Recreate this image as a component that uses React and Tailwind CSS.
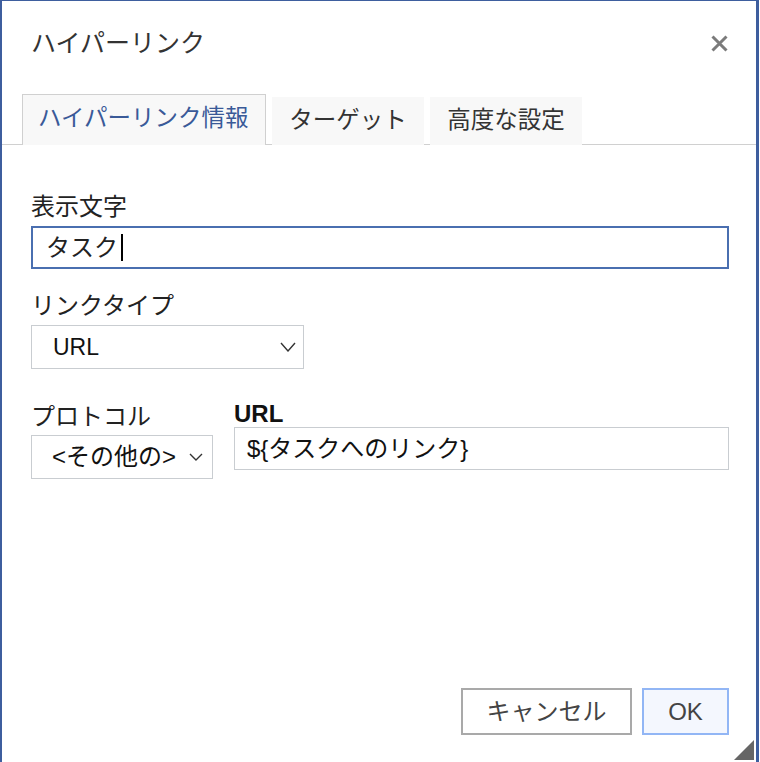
import React from "react";

const JP = { fontFamily: "'Liberation Sans','Noto Sans CJK JP',sans-serif" };

function Chevron({ w = 16, h = 9 }) {
  return (
    <svg width={w} height={h + 1} viewBox={`0 0 ${w} ${h + 1}`} fill="none">
      <polyline points={`1,1 ${w / 2},${h} ${w - 1},1`} stroke="#333" strokeWidth="1.4" />
    </svg>
  );
}

export default function App() {
  return (
    <div className="w-[760px] h-[762px] bg-white overflow-hidden" style={JP}>
      <div className="relative w-[759px] h-[763px] border-t border-l-2 border-r-[3px] border-[#3e5e9e] bg-white flex flex-col">
        {/* header */}
        <div className="h-[84px] shrink-0 flex items-center justify-between pl-[29px] pr-[28px]">
          <div className="text-[25px] text-[#333] leading-none">ハイパーリンク</div>
          <svg width="17" height="17" viewBox="0 0 17 17">
            <path d="M1.5 1.5 L15.5 15.5 M15.5 1.5 L1.5 15.5" stroke="#7b7b7b" strokeWidth="3" />
          </svg>
        </div>
        {/* tabs */}
        <div className="h-[60px] shrink-0 flex items-end gap-[6px] pl-[20px] border-b border-[#d0d0d0]">
          <div className="relative -mb-px w-[244px] h-[51px] border border-b-0 border-[#d0d0d0] bg-[#f8f8f8] flex items-center pl-[15px] pb-[3px] text-[23.5px] text-[#3a5a98] leading-none">
            ハイパーリンク情報
          </div>
          <div className="relative -mb-px w-[152px] h-[48px] bg-[#f8f8f8] flex items-center justify-center pb-[1px] text-[23.5px] text-[#333] leading-none">
            ターゲット
          </div>
          <div className="relative -mb-px w-[152px] h-[48px] bg-[#f8f8f8] flex items-center justify-center pb-[1px] text-[23.5px] text-[#333] leading-none">
            高度な設定
          </div>
        </div>
        {/* body */}
        <div className="flex-1 flex flex-col pl-[29px] pr-[27px]">
          <div className="mt-[47px] mb-[4px] h-[30px] flex items-center text-[24px] text-[#222] leading-none">表示文字</div>
          <div className="h-[43px] border-2 border-[#4a6fb0] flex items-center pl-[13px] text-[24px] text-[#222] leading-none">
            <span>タスク</span>
            <span className="ml-[3px] w-[2px] h-[27px] bg-black"></span>
          </div>
          <div className="mt-[22px] mb-[4px] h-[30px] flex items-center text-[24px] text-[#222] leading-none">リンクタイプ</div>
          <div className="w-[273px] h-[44px] border border-[#c9cdd1] flex items-center justify-between pl-[21px] pr-[7px] text-[23px] text-[#111] leading-none">
            <span>URL</span>
            <Chevron w={16} h={9} />
          </div>
          <div className="mt-[32px] flex gap-[21px] items-start">
            <div className="flex flex-col">
              <div className="mt-[1px] mb-[3px] h-[30px] flex items-center text-[24px] text-[#222] leading-none">プロトコル</div>
              <div className="w-[182px] h-[44px] border border-[#c9cdd1] flex items-center justify-between pl-[20px] pr-[9px] text-[24px] text-[#111] leading-none">
                <span>&lt;その他の&gt;</span>
                <Chevron w={14} h={7} />
              </div>
            </div>
            <div className="flex-1 flex flex-col">
              <div className="h-[26px] flex items-center text-[24px] font-bold text-[#111] leading-none">URL</div>
              <div className="h-[43px] border border-[#c9cdd1] flex items-center pl-[12px] text-[24px] text-[#111] leading-none">
                {"${タスクへのリンク}"}
              </div>
            </div>
          </div>
          <div className="mt-auto mb-[28px] flex justify-end gap-[10px]">
            <button className="w-[171px] h-[47px] border-2 border-[#a9a9a9] bg-white text-[24px] text-[#444] leading-none flex items-center justify-center">
              キャンセル
            </button>
            <button className="w-[87px] h-[47px] border-2 border-[#92b6f5] bg-[#f4f7fe] text-[24px] text-[#444] leading-none flex items-center justify-center">
              OK
            </button>
          </div>
        </div>
        <svg className="absolute right-[2px] bottom-[3px]" width="20" height="20" viewBox="0 0 20 20">
          <polygon points="20,0 20,20 0,20" fill="#666" />
        </svg>
      </div>
    </div>
  );
}
